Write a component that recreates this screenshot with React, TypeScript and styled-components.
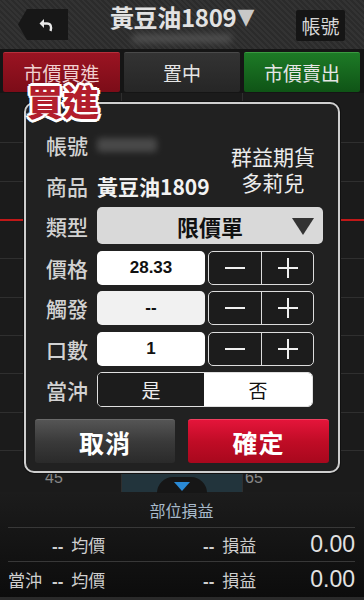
import React from "react";
import styled, { createGlobalStyle } from "styled-components";

const CJK = `"Noto Sans CJK TC", "Noto Sans CJK SC", "Liberation Sans", sans-serif`;

const Global = createGlobalStyle`
  html, body { margin: 0; padding: 0; background: #1a1a1a; }
  body { font-family: ${CJK}; }
  * { box-sizing: border-box; }
`;

const Page = styled.div`
  position: relative;
  width: 364px;
  height: 600px;
  overflow: hidden;
  display: flex;
  flex-direction: column;
  background: #1a1a1a;
  font-family: ${CJK};
`;

const Header = styled.div`
  height: 50px;
  flex: none;
  display: flex;
  align-items: flex-start;
  justify-content: space-between;
  padding: 9px 19px 0 18px;
  background: repeating-linear-gradient(45deg, #333 0 2px, #2b2b2b 2px 4px);
  border-bottom: 1px solid #151515;
  position: relative;
`;

const BackButton = styled.div`
  width: 50px;
  height: 31px;
  background: #171717;
  clip-path: polygon(0 50%, 18% 0, 100% 0, 100% 100%, 18% 100%);
  display: flex;
  align-items: center;
  justify-content: center;
  padding-left: 6px;
`;

const TitleBox = styled.div`
  display: flex;
  flex-direction: column;
  align-items: center;
  margin-top: -9px;
`;

const Title = styled.div`
  font-size: 24px;
  font-weight: 700;
  color: #e2e2e2;
  line-height: 34px;
  letter-spacing: -0.3px;
  display: flex;
  align-items: center;
`;

const TitleArrow = styled.span`
  color: #c8c8c8;
  font-size: 22px;
  margin-left: 1px;
  font-family: "DejaVu Sans", sans-serif;
`;

const Blur = styled.div<{ $w: number; $h: number }>`
  width: ${(p) => p.$w}px;
  height: ${(p) => p.$h}px;
  background: #5a5a5a;
  filter: blur(3px);
  border-radius: 4px;
  opacity: 0.7;
`;

const AccountButton = styled.div`
  width: 49px;
  height: 31px;
  background: #151515;
  border-radius: 2px;
  color: #d8d8d8;
  font-size: 19px;
  display: flex;
  align-items: center;
  justify-content: center;
  margin-top: 1px;
`;

const ActionBar = styled.div`
  height: 43px;
  flex: none;
  display: grid;
  grid-template-columns: 117px 116px 116px;
  gap: 4px;
  padding: 2px 3px 1px 3px;
  background: #151515;
`;

const ActionButton = styled.div<{ $tone: "red" | "dark" | "green" }>`
  border-radius: 2px;
  display: flex;
  align-items: center;
  justify-content: center;
  font-size: 19px;
  color: ${(p) => (p.$tone === "red" ? "#f0d0d0" : "#e6e6e6")};
  background: ${(p) =>
    p.$tone === "red"
      ? "linear-gradient(#9a1422, #7c0c18)"
      : p.$tone === "green"
      ? "linear-gradient(#1d7a26, #0f5416)"
      : "linear-gradient(#333, #262626)"};
  border-top: 1px solid
    ${(p) => (p.$tone === "red" ? "#b8303c" : p.$tone === "green" ? "#3a9a40" : "#4a4a4a")};
`;

const Chart = styled.div`
  flex: 1;
  position: relative;
  background: #1b1b1b;
`;

const ChartSvg = styled.svg`
  display: block;
`;

const Bottom = styled.div`
  height: 108px;
  flex: none;
  background: linear-gradient(#1c1c1c, #0c0c0c);
  display: flex;
  flex-direction: column;
  padding: 0 9px 0 8px;
  border-bottom: 3px solid #2a2a2a;
  position: relative;
`;

const Tab = styled.div`
  position: absolute;
  left: 157px;
  top: -15px;
  width: 50px;
  height: 16px;
  border-radius: 25px 25px 0 0;
  background: #161616;
  display: flex;
  justify-content: center;
  padding-top: 5px;
`;

const BottomTitle = styled.div`
  height: 36px;
  display: flex;
  align-items: center;
  justify-content: center;
  color: #a8bacb;
  font-size: 16px;
  border-bottom: 1px solid #383838;
`;

const PLRow = styled.div<{ $last?: boolean }>`
  height: 34px;
  display: grid;
  grid-template-columns: 44px 151px 1fr auto;
  align-items: center;
  color: #cfcfcf;
  font-size: 17px;
  border-bottom: ${(p) => (p.$last ? "none" : "1px solid #383838")};
`;

const PLValue = styled.div`
  font-family: "Liberation Sans", sans-serif;
  font-size: 23px;
  color: #e2e2e2;
  text-align: right;
`;

const Dash = styled.span`
  font-family: "Liberation Sans", sans-serif;
  font-weight: 700;
  margin-right: 8px;
`;

const Dialog = styled.div`
  position: absolute;
  left: 24px;
  top: 102px;
  width: 316px;
  height: 371px;
  border: 2px solid #cfcfcf;
  border-radius: 10px;
  background: #212121;
  box-shadow: 0 0 0 1px #111;
  display: flex;
  flex-direction: column;
  padding: 27px 15px 0 21px;
`;

const Badge = styled.div`
  position: absolute;
  left: 27px;
  top: 78px;
  font-size: 36px;
  font-weight: 900;
  line-height: 44px;
  color: #b21e2c;
  letter-spacing: 0px;
  text-shadow: 2px 0 0 #fff, -2px 0 0 #fff, 0 2px 0 #fff, 0 -2px 0 #fff,
    2px 2px 0 #fff, -2px -2px 0 #fff, 2px -2px 0 #fff, -2px 2px 0 #fff,
    3px 0 0 #fff, -3px 0 0 #fff, 0 3px 0 #fff, 0 -3px 0 #fff;
`;

const Info = styled.div`
  display: flex;
  justify-content: space-between;
  height: 69px;
`;

const InfoLeft = styled.div`
  display: flex;
  flex-direction: column;
  gap: 13px;
`;

const InfoLine = styled.div`
  height: 28px;
  display: flex;
  align-items: center;
`;

const Label = styled.div`
  width: 50px;
  flex: none;
  font-size: 21px;
  font-weight: 500;
  color: #d2d2d2;
  line-height: 28px;
  margin-left: -1px;
  margin-right: 1px;
`;

const ProductValue = styled.div`
  font-size: 21px;
  font-weight: 700;
  color: #f2f2f2;
  letter-spacing: 0px;
`;

const Company = styled.div`
  margin-top: 12px;
  width: 92px;
  text-align: center;
  font-size: 21px;
  line-height: 26px;
  color: #ececec;
  margin-right: 4px;
  white-space: nowrap;
`;

const FormRow = styled.div<{ $h: number; $mt: number }>`
  height: ${(p) => p.$h}px;
  margin-top: ${(p) => p.$mt}px;
  display: flex;
  align-items: center;
`;

const Select = styled.div`
  width: 226px;
  height: 100%;
  background: #d9d9d9;
  border-radius: 5px;
  display: flex;
  align-items: center;
  position: relative;
  justify-content: center;
  font-size: 22px;
  font-weight: 700;
  color: #111;
`;

const SelectArrow = styled.div`
  position: absolute;
  right: 9px;
  top: 11px;
  width: 0;
  height: 0;
  border-left: 11px solid transparent;
  border-right: 11px solid transparent;
  border-top: 17px solid #333;
`;

const Input = styled.div<{ $muted?: boolean }>`
  width: 108px;
  height: 100%;
  background: ${(p) => (p.$muted ? "#f1f1f1" : "#ffffff")};
  border-radius: 5px;
  display: flex;
  align-items: center;
  justify-content: center;
  font-family: "Liberation Sans", sans-serif;
  font-weight: 700;
  font-size: 17px;
  color: #111;
`;

const Stepper = styled.div`
  margin-left: 3px;
  width: 106px;
  height: 100%;
  border: 1.5px solid #dcdcdc;
  border-radius: 5px;
  background: #1c1c1c;
  display: grid;
  grid-template-columns: 1fr 1fr;
`;

const StepCell = styled.div<{ $divider?: boolean }>`
  display: flex;
  align-items: center;
  justify-content: center;
  border-left: ${(p) => (p.$divider ? "1.5px solid #dcdcdc" : "none")};
`;

const Segmented = styled.div`
  width: 216px;
  height: 100%;
  border: 1.5px solid #e0e0e0;
  border-radius: 5px;
  overflow: hidden;
  display: grid;
  grid-template-columns: 106px 1fr;
`;

const Segment = styled.div<{ $active?: boolean }>`
  display: flex;
  align-items: center;
  justify-content: center;
  font-size: 19px;
  background: ${(p) => (p.$active ? "#ffffff" : "#1c1c1c")};
  color: ${(p) => (p.$active ? "#111" : "#eee")};
`;

const Buttons = styled.div`
  margin-top: 12px;
  margin-left: -12px;
  margin-right: -6px;
  display: grid;
  grid-template-columns: 140px 141px;
  gap: 13px;
  height: 44px;
`;

const BigButton = styled.div<{ $primary?: boolean }>`
  border-radius: 3px;
  display: flex;
  align-items: center;
  justify-content: center;
  font-size: 25px;
  font-weight: 700;
  color: #fff;
  letter-spacing: 1px;
  background: ${(p) =>
    p.$primary
      ? "linear-gradient(#e4153a, #c00c26 50%, #a8081d)"
      : "linear-gradient(#555, #3a3a3a 50%, #2a2a2a)"};
  border-top: 1px solid ${(p) => (p.$primary ? "#f04060" : "#6a6a6a")};
`;

const Minus = () => (
  <svg width="20" height="4" viewBox="0 0 20 4">
    <rect x="0" y="1" width="20" height="2" fill="#f0f0f0" />
  </svg>
);

const Plus = () => (
  <svg width="20" height="20" viewBox="0 0 20 20">
    <rect x="0" y="9" width="20" height="2" fill="#f0f0f0" />
    <rect x="9" y="0" width="2" height="20" fill="#f0f0f0" />
  </svg>
);

const Stepper2 = () => (
  <Stepper>
    <StepCell>
      <Minus />
    </StepCell>
    <StepCell $divider>
      <Plus />
    </StepCell>
  </Stepper>
);

const gridYs = [49, 88, 165, 204, 242, 280, 319, 357];

export default function App() {
  return (
    <>
      <Global />
      <Page>
        <Header>
          <BackButton>
            <svg width="16" height="16" viewBox="0 0 16 16">
              <path d="M6 2 L1.5 6.5 L6 11 Z" fill="#e8e8e8" />
              <path d="M5 6.5 H9 C12.5 6.5 14 9.5 12.5 14" stroke="#e8e8e8" strokeWidth="2.4" fill="none" />
            </svg>
          </BackButton>
          <TitleBox>
            <Title>
              黃豆油1809<TitleArrow>▼</TitleArrow>
            </Title>
            <Blur $w={100} $h={9} />
          </TitleBox>
          <AccountButton>帳號</AccountButton>
        </Header>
        <ActionBar>
          <ActionButton $tone="red">市價買進</ActionButton>
          <ActionButton $tone="dark">置中</ActionButton>
          <ActionButton $tone="green">市價賣出</ActionButton>
        </ActionBar>
        <Chart>
          <ChartSvg width="364" height="399" viewBox="0 0 364 399">
            <rect x="122" y="376" width="120" height="23" fill="#22343c" />
            {gridYs.map((y) => (
              <line key={y} x1="0" x2="364" y1={y + 0.5} y2={y + 0.5} stroke="#2f2f2f" />
            ))}
            <line x1="0" x2="364" y1="127" y2="127" stroke="#c01818" strokeWidth="2" />
            <line x1="121.5" x2="121.5" y1="0" y2="399" stroke="#2f2f2f" />
            <line x1="242.5" x2="242.5" y1="0" y2="399" stroke="#2f2f2f" />
            <text x="45" y="390" fill="#888" fontSize="16" fontFamily="Liberation Sans">45</text>
            <text x="245" y="390" fill="#888" fontSize="16" fontFamily="Liberation Sans">65</text>
          </ChartSvg>
        </Chart>
        <Bottom>
          <Tab>
            <svg width="16" height="9" viewBox="0 0 16 9">
              <path d="M0 0 H16 L8 9 Z" fill="#2a8ad6" />
            </svg>
          </Tab>
          <BottomTitle>部位損益</BottomTitle>
          <PLRow>
            <span />
            <span>
              <Dash>--</Dash>均價
            </span>
            <span>
              <Dash>--</Dash>損益
            </span>
            <PLValue>0.00</PLValue>
          </PLRow>
          <PLRow $last>
            <span>當沖</span>
            <span>
              <Dash>--</Dash>均價
            </span>
            <span>
              <Dash>--</Dash>損益
            </span>
            <PLValue>0.00</PLValue>
          </PLRow>
        </Bottom>

        <Dialog>
          <Info>
            <InfoLeft>
              <InfoLine>
                <Label>帳號</Label>
                <Blur $w={60} $h={14} />
              </InfoLine>
              <InfoLine>
                <Label>商品</Label>
                <ProductValue>黃豆油1809</ProductValue>
              </InfoLine>
            </InfoLeft>
            <Company>
              群益期貨
              <br />
              多莉兒
            </Company>
          </Info>
          <FormRow $h={37} $mt={7}>
            <Label>類型</Label>
            <Select>
              限價單
              <SelectArrow />
            </Select>
          </FormRow>
          <FormRow $h={34} $mt={7}>
            <Label>價格</Label>
            <Input>28.33</Input>
            <Stepper2 />
          </FormRow>
          <FormRow $h={34} $mt={6}>
            <Label>觸發</Label>
            <Input $muted>--</Input>
            <Stepper2 />
          </FormRow>
          <FormRow $h={34} $mt={7}>
            <Label>口數</Label>
            <Input>1</Input>
            <Stepper2 />
          </FormRow>
          <FormRow $h={35} $mt={6}>
            <Label>當沖</Label>
            <Segmented>
              <Segment>是</Segment>
              <Segment $active>否</Segment>
            </Segmented>
          </FormRow>
          <Buttons>
            <BigButton>取消</BigButton>
            <BigButton $primary>確定</BigButton>
          </Buttons>
        </Dialog>
        <Badge>買進</Badge>
      </Page>
    </>
  );
}
